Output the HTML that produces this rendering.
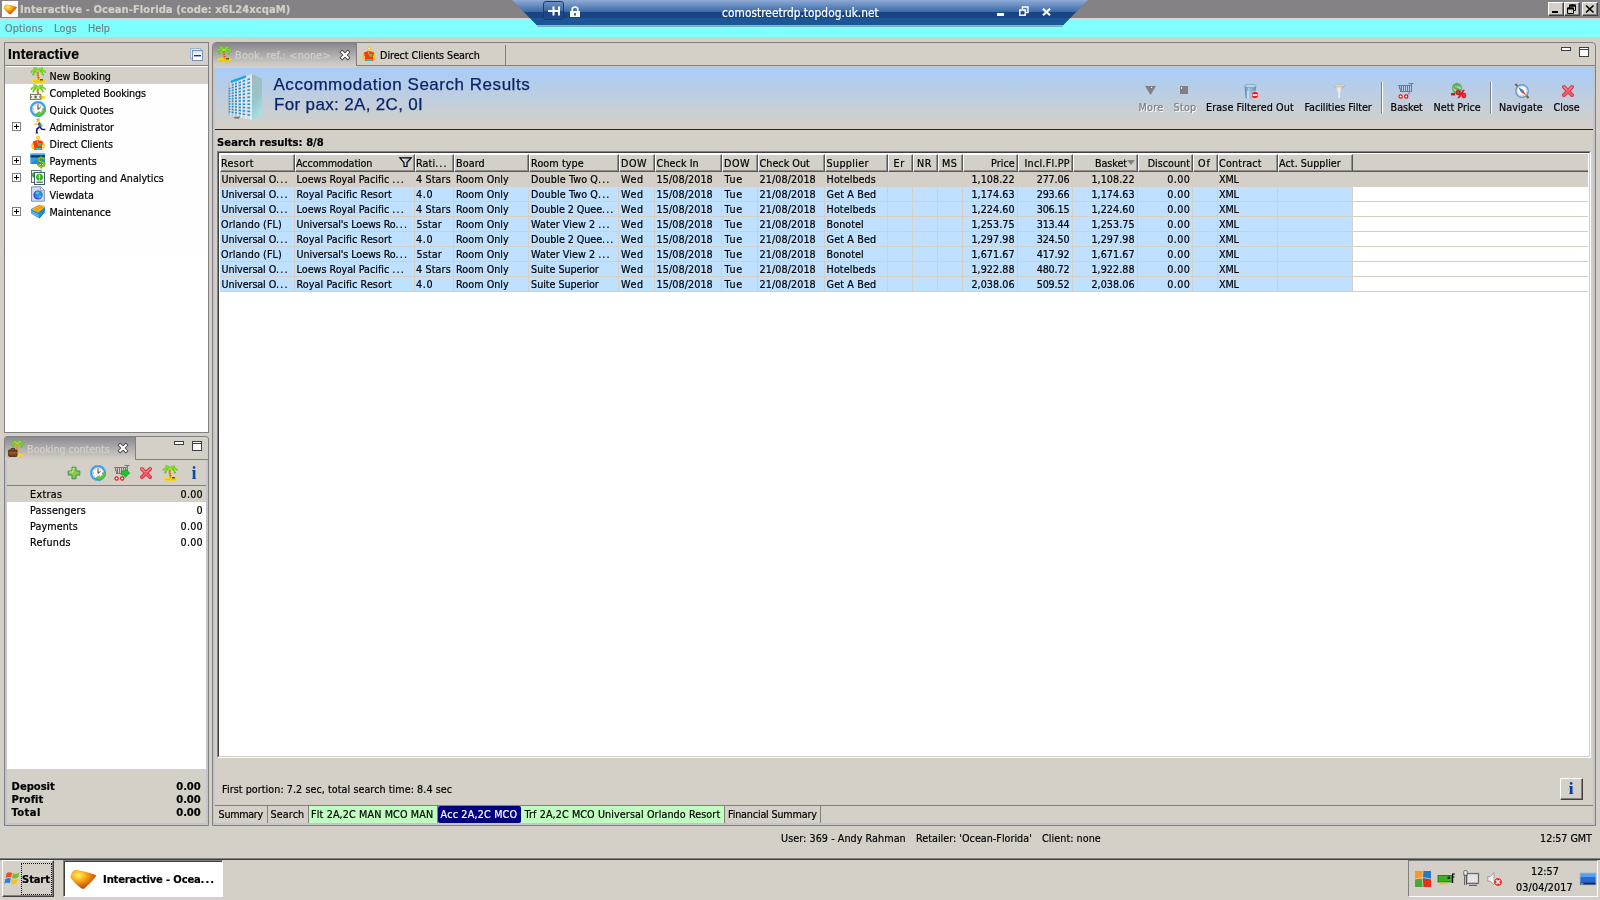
<!DOCTYPE html><html><head><meta charset="utf-8"><title>Interactive</title><style>
*{box-sizing:border-box;margin:0;padding:0}
html,body{width:1600px;height:900px;overflow:hidden;background:#d4d0c8}
#w{position:absolute;left:0;top:0;width:1600px;height:900px;will-change:transform;opacity:.9999}
body{font-family:"DejaVu Sans Condensed","DejaVu Sans","Liberation Sans",sans-serif;font-size:10.7px;color:#000;position:relative;line-height:13px;-webkit-text-stroke:.2px}
.a{position:absolute;white-space:nowrap}
.b{font-weight:bold;font-size:11.1px}
.t{position:absolute;white-space:nowrap;line-height:13px;height:13px}
svg{position:absolute;overflow:visible}
.r{text-align:right}
</style></head><body><div id="w">
<div class="a" style="left:0px;top:0px;width:1600px;height:18px;background:#848284;"></div>
<div class="a" style="left:0px;top:18px;width:1600px;height:19px;background:#80ffff;"></div>
<div class="a" style="left:0px;top:18px;width:1600px;height:1px;background:#dcd4d4;"></div>
<div class="t b" style="left:20.1px;top:3px;color:#d4d0c8;letter-spacing:0.059px;">Interactive - Ocean-Florida (code: x6L24xcqaM)</div>
<div class="t " style="left:5.1px;top:22px;color:#6c8488;letter-spacing:0.084px;">Options</div>
<div class="t " style="left:54.1px;top:22px;color:#6c8488;letter-spacing:0.132px;">Logs</div>
<div class="t " style="left:88.1px;top:22px;color:#6c8488;letter-spacing:-0.059px;">Help</div>
<div class="a" style="left:4px;top:42px;width:205px;height:391px;background:#fff;border:1px solid #808080"></div>
<div class="a" style="left:5px;top:43px;width:203px;height:23px;background:#d4d0c8;border-bottom:1px solid #808080"></div>
<div class="a" style="left:8px;top:45px;font:bold 14px 'Liberation Sans',sans-serif;line-height:18px;letter-spacing:.1px">Interactive</div>
<div class="a" style="left:5px;top:67px;width:203px;height:17px;background:#d4d0c8;"></div>
<div class="t " style="left:49.6px;top:70px;letter-spacing:-0.148px;">New Booking</div>
<div class="t " style="left:49.6px;top:87px;letter-spacing:-0.174px;">Completed Bookings</div>
<div class="t " style="left:49.6px;top:104px;letter-spacing:-0.024px;">Quick Quotes</div>
<div class="t " style="left:49.6px;top:121px;letter-spacing:-0.102px;">Administrator</div>
<div class="a" style="left:12px;top:122px;width:9px;height:9px;border:1px solid #808080;background:#fff"></div>
<div class="a" style="left:14px;top:126px;width:5px;height:1px;background:#000;"></div>
<div class="a" style="left:16px;top:124px;width:1px;height:5px;background:#000;"></div>
<div class="t " style="left:49.6px;top:138px;letter-spacing:-0.105px;">Direct Clients</div>
<div class="t " style="left:49.6px;top:155px;letter-spacing:0.017px;">Payments</div>
<div class="a" style="left:12px;top:156px;width:9px;height:9px;border:1px solid #808080;background:#fff"></div>
<div class="a" style="left:14px;top:160px;width:5px;height:1px;background:#000;"></div>
<div class="a" style="left:16px;top:158px;width:1px;height:5px;background:#000;"></div>
<div class="t " style="left:49.6px;top:172px;letter-spacing:-0.016px;">Reporting and Analytics</div>
<div class="a" style="left:12px;top:173px;width:9px;height:9px;border:1px solid #808080;background:#fff"></div>
<div class="a" style="left:14px;top:177px;width:5px;height:1px;background:#000;"></div>
<div class="a" style="left:16px;top:175px;width:1px;height:5px;background:#000;"></div>
<div class="t " style="left:49.6px;top:189px;letter-spacing:-0.032px;">Viewdata</div>
<div class="t " style="left:49.6px;top:206px;letter-spacing:-0.067px;">Maintenance</div>
<div class="a" style="left:12px;top:207px;width:9px;height:9px;border:1px solid #808080;background:#fff"></div>
<div class="a" style="left:14px;top:211px;width:5px;height:1px;background:#000;"></div>
<div class="a" style="left:16px;top:209px;width:1px;height:5px;background:#000;"></div>
<div class="a" style="left:4px;top:436px;width:205px;height:390px;background:#d4d0c8;border:1px solid #808080;border-radius:3px 3px 0 0"></div>
<div class="a" style="left:5px;top:437px;width:131px;height:23px;background:linear-gradient(#8c8a90,#d4d0c8);border-right:1px solid #808080;border-radius:2px 0 0 0"></div>
<div class="a" style="left:136px;top:459px;width:72px;height:1px;background:#808080;"></div>
<div class="t " style="left:27.1px;top:443px;color:#d4d0c8;letter-spacing:-0.062px;">Booking contents</div>
<div class="a" style="left:7px;top:486px;width:199px;height:283px;background:#fff;"></div>
<div class="a" style="left:7px;top:485px;width:199px;height:1px;background:#808080;"></div>
<div class="a" style="left:5px;top:460px;width:2px;height:365px;background:#c4c4ca;"></div>
<div class="a" style="left:206px;top:460px;width:2px;height:365px;background:#c4c4ca;"></div>
<div class="a" style="left:5px;top:823px;width:203px;height:2px;background:#c4c4ca;"></div>
<div class="a" style="left:7px;top:486px;width:199px;height:16px;background:#d4d0c8;"></div>
<div class="t " style="left:30.1px;top:488px;letter-spacing:0.285px;">Extras</div>
<div class="t r " style="right:1397.2px;top:488px;letter-spacing:0.198px;">0.00</div>
<div class="t " style="left:30.1px;top:504px;letter-spacing:0.147px;">Passengers</div>
<div class="t r " style="right:1397.3px;top:504px;letter-spacing:0.075px;">0</div>
<div class="t " style="left:30.1px;top:520px;letter-spacing:0.08px;">Payments</div>
<div class="t r " style="right:1397.2px;top:520px;letter-spacing:0.198px;">0.00</div>
<div class="t " style="left:30.1px;top:536px;letter-spacing:0.27px;">Refunds</div>
<div class="t r " style="right:1397.2px;top:536px;letter-spacing:0.198px;">0.00</div>
<div class="t b" style="left:11.6px;top:780px;letter-spacing:-0.0px;">Deposit</div>
<div class="t r b" style="right:1399.5px;top:780px;letter-spacing:-0.11px;">0.00</div>
<div class="t b" style="left:11.6px;top:793px;letter-spacing:-0.014px;">Profit</div>
<div class="t r b" style="right:1399.5px;top:793px;letter-spacing:-0.11px;">0.00</div>
<div class="t b" style="left:11.6px;top:806px;letter-spacing:0.415px;">Total</div>
<div class="t r b" style="right:1399.5px;top:806px;letter-spacing:-0.11px;">0.00</div>
<div class="a" style="left:212px;top:42px;width:1384px;height:784px;background:#d4d0c8;border:1px solid #808080;border-radius:4px 4px 0 0"></div>
<div class="a" style="left:213px;top:43px;width:143px;height:23px;background:linear-gradient(#88868c,#d4d0c8);border-radius:3px 0 0 0"></div>
<div class="a" style="left:356px;top:43px;width:1px;height:23px;background:#808080;"></div>
<div class="a" style="left:356px;top:65px;width:1239px;height:1px;background:#808080;"></div>
<div class="a" style="left:357px;top:66px;width:1236px;height:2px;background:#c8c6c2;"></div>
<div class="a" style="left:505px;top:45px;width:1px;height:20px;background:#808080;"></div>
<div class="a" style="left:213px;top:66px;width:2px;height:759px;background:#c4c4ca;"></div>
<div class="a" style="left:1593px;top:66px;width:2px;height:759px;background:#c4c4ca;"></div>
<div class="a" style="left:213px;top:823px;width:1382px;height:2px;background:#c4c4ca;"></div>
<div class="t " style="left:235.1px;top:49px;color:#d0d0d0;letter-spacing:0.22px;">Book. ref.: &lt;none&gt;</div>
<div class="t " style="left:380.1px;top:49px;letter-spacing:-0.049px;">Direct Clients Search</div>
<div class="a" style="left:215px;top:68px;width:1378px;height:61px;background:linear-gradient(#a8ccf8,#d4d0c8 96%);"></div>
<div class="a" style="left:215px;top:129px;width:1378px;height:1px;background:#0a246a;"></div>
<div class="a" style="left:273.5px;top:75.3px;font:17px 'Liberation Sans',sans-serif;line-height:20px;height:20px;color:#0a246a;-webkit-text-stroke:.25px;letter-spacing:0.529px">Accommodation Search Results</div>
<div class="a" style="left:274px;top:95.3px;font:17px 'Liberation Sans',sans-serif;line-height:20px;height:20px;color:#0a246a;-webkit-text-stroke:.25px;letter-spacing:0.343px">For pax: 2A, 2C, 0I</div>
<div class="t b" style="left:217.1px;top:136px;letter-spacing:0.037px;">Search results: 8/8</div>
<div class="t " style="left:1138.6px;top:101px;color:#808080;text-shadow:1px 1px 0 #fff;letter-spacing:0.222px;">More</div>
<div class="t " style="left:1173.6px;top:101px;color:#808080;text-shadow:1px 1px 0 #fff;letter-spacing:0.206px;">Stop</div>
<div class="t " style="left:1206.1px;top:101px;letter-spacing:0.1px;">Erase Filtered Out</div>
<div class="t " style="left:1304.6px;top:101px;letter-spacing:-0.042px;">Facilities Filter</div>
<div class="t " style="left:1390.6px;top:101px;letter-spacing:-0.029px;">Basket</div>
<div class="t " style="left:1433.6px;top:101px;letter-spacing:0.006px;">Nett Price</div>
<div class="t " style="left:1499.1px;top:101px;letter-spacing:0.07px;">Navigate</div>
<div class="t " style="left:1553.6px;top:101px;letter-spacing:-0.001px;">Close</div>
<div class="a" style="left:1381px;top:82px;width:1px;height:32px;background:#808080;"></div>
<div class="a" style="left:1382px;top:82px;width:1px;height:32px;background:#fff;"></div>
<div class="a" style="left:1490px;top:82px;width:1px;height:32px;background:#808080;"></div>
<div class="a" style="left:1491px;top:82px;width:1px;height:32px;background:#fff;"></div>
<div class="a" style="left:217px;top:151px;width:1374px;height:607px;background:#fff;border:1px solid #808080;border-right-color:#fff;border-bottom-color:#fff"></div>
<div class="a" style="left:218px;top:152px;width:1372px;height:605px;background:#fff;border:1px solid #404040;border-right-color:#d4d0c8;border-bottom-color:#d4d0c8"></div>
<div class="a" style="left:220px;top:154px;width:1368px;height:18px;background:#d4d0c8;"></div>
<div class="a" style="left:1353px;top:170px;width:235px;height:1px;background:#909090;"></div>
<div class="a" style="left:1353px;top:171px;width:235px;height:1px;background:#585858;"></div>
<div class="a" style="left:220px;top:154px;width:75px;height:18px;border-left:1px solid #fff;border-top:1px solid #fff;border-right:1px solid #585858;border-bottom:1px solid #585858;background:#d4d0c8"><div class="a" style="left:0;top:0;right:0;bottom:0;border-right:1px solid #909090;border-bottom:1px solid #909090"></div></div>
<div class="t " style="left:221.1px;top:157px;letter-spacing:0.328px;">Resort</div>
<div class="a" style="left:295px;top:154px;width:120px;height:18px;border-left:1px solid #fff;border-top:1px solid #fff;border-right:1px solid #585858;border-bottom:1px solid #585858;background:#d4d0c8"><div class="a" style="left:0;top:0;right:0;bottom:0;border-right:1px solid #909090;border-bottom:1px solid #909090"></div></div>
<div class="t " style="left:296.1px;top:157px;letter-spacing:-0.129px;">Accommodation</div>
<div class="a" style="left:415px;top:154px;width:39px;height:18px;border-left:1px solid #fff;border-top:1px solid #fff;border-right:1px solid #585858;border-bottom:1px solid #585858;background:#d4d0c8"><div class="a" style="left:0;top:0;right:0;bottom:0;border-right:1px solid #909090;border-bottom:1px solid #909090"></div></div>
<div class="t " style="left:416.1px;top:157px;letter-spacing:0.064px;">Rati<span style="letter-spacing:1.1px">...</span></div>
<div class="a" style="left:454px;top:154px;width:75px;height:18px;border-left:1px solid #fff;border-top:1px solid #fff;border-right:1px solid #585858;border-bottom:1px solid #585858;background:#d4d0c8"><div class="a" style="left:0;top:0;right:0;bottom:0;border-right:1px solid #909090;border-bottom:1px solid #909090"></div></div>
<div class="t " style="left:456.1px;top:157px;letter-spacing:0.09px;">Board</div>
<div class="a" style="left:529px;top:154px;width:90px;height:18px;border-left:1px solid #fff;border-top:1px solid #fff;border-right:1px solid #585858;border-bottom:1px solid #585858;background:#d4d0c8"><div class="a" style="left:0;top:0;right:0;bottom:0;border-right:1px solid #909090;border-bottom:1px solid #909090"></div></div>
<div class="t " style="left:531.1px;top:157px;letter-spacing:0.092px;">Room type</div>
<div class="a" style="left:619px;top:154px;width:36px;height:18px;border-left:1px solid #fff;border-top:1px solid #fff;border-right:1px solid #585858;border-bottom:1px solid #585858;background:#d4d0c8"><div class="a" style="left:0;top:0;right:0;bottom:0;border-right:1px solid #909090;border-bottom:1px solid #909090"></div></div>
<div class="t " style="left:621.1px;top:157px;letter-spacing:0.405px;">DOW</div>
<div class="a" style="left:655px;top:154px;width:67px;height:18px;border-left:1px solid #fff;border-top:1px solid #fff;border-right:1px solid #585858;border-bottom:1px solid #585858;background:#d4d0c8"><div class="a" style="left:0;top:0;right:0;bottom:0;border-right:1px solid #909090;border-bottom:1px solid #909090"></div></div>
<div class="t " style="left:656.6px;top:157px;letter-spacing:0.078px;">Check In</div>
<div class="a" style="left:722px;top:154px;width:36px;height:18px;border-left:1px solid #fff;border-top:1px solid #fff;border-right:1px solid #585858;border-bottom:1px solid #585858;background:#d4d0c8"><div class="a" style="left:0;top:0;right:0;bottom:0;border-right:1px solid #909090;border-bottom:1px solid #909090"></div></div>
<div class="t " style="left:724.1px;top:157px;letter-spacing:0.405px;">DOW</div>
<div class="a" style="left:758px;top:154px;width:67px;height:18px;border-left:1px solid #fff;border-top:1px solid #fff;border-right:1px solid #585858;border-bottom:1px solid #585858;background:#d4d0c8"><div class="a" style="left:0;top:0;right:0;bottom:0;border-right:1px solid #909090;border-bottom:1px solid #909090"></div></div>
<div class="t " style="left:759.6px;top:157px;letter-spacing:0.014px;">Check Out</div>
<div class="a" style="left:825px;top:154px;width:63px;height:18px;border-left:1px solid #fff;border-top:1px solid #fff;border-right:1px solid #585858;border-bottom:1px solid #585858;background:#d4d0c8"><div class="a" style="left:0;top:0;right:0;bottom:0;border-right:1px solid #909090;border-bottom:1px solid #909090"></div></div>
<div class="t " style="left:826.6px;top:157px;letter-spacing:0.322px;">Supplier</div>
<div class="a" style="left:888px;top:154px;width:25px;height:18px;border-left:1px solid #fff;border-top:1px solid #fff;border-right:1px solid #585858;border-bottom:1px solid #585858;background:#d4d0c8"><div class="a" style="left:0;top:0;right:0;bottom:0;border-right:1px solid #909090;border-bottom:1px solid #909090"></div></div>
<div class="t " style="left:893.6px;top:157px;letter-spacing:0.584px;">Er</div>
<div class="a" style="left:913px;top:154px;width:25px;height:18px;border-left:1px solid #fff;border-top:1px solid #fff;border-right:1px solid #585858;border-bottom:1px solid #585858;background:#d4d0c8"><div class="a" style="left:0;top:0;right:0;bottom:0;border-right:1px solid #909090;border-bottom:1px solid #909090"></div></div>
<div class="t " style="left:917.1px;top:157px;letter-spacing:0.412px;">NR</div>
<div class="a" style="left:938px;top:154px;width:25px;height:18px;border-left:1px solid #fff;border-top:1px solid #fff;border-right:1px solid #585858;border-bottom:1px solid #585858;background:#d4d0c8"><div class="a" style="left:0;top:0;right:0;bottom:0;border-right:1px solid #909090;border-bottom:1px solid #909090"></div></div>
<div class="t " style="left:942.1px;top:157px;letter-spacing:0.397px;">MS</div>
<div class="a" style="left:963px;top:154px;width:55px;height:18px;border-left:1px solid #fff;border-top:1px solid #fff;border-right:1px solid #585858;border-bottom:1px solid #585858;background:#d4d0c8"><div class="a" style="left:0;top:0;right:0;bottom:0;border-right:1px solid #909090;border-bottom:1px solid #909090"></div></div>
<div class="t r " style="right:585.4px;top:157px;letter-spacing:0.012px;">Price</div>
<div class="a" style="left:1018px;top:154px;width:55px;height:18px;border-left:1px solid #fff;border-top:1px solid #fff;border-right:1px solid #585858;border-bottom:1px solid #585858;background:#d4d0c8"><div class="a" style="left:0;top:0;right:0;bottom:0;border-right:1px solid #909090;border-bottom:1px solid #909090"></div></div>
<div class="t r " style="right:530.0999999999999px;top:157px;letter-spacing:0.27px;">Incl.Fl.PP</div>
<div class="a" style="left:1073px;top:154px;width:65px;height:18px;border-left:1px solid #fff;border-top:1px solid #fff;border-right:1px solid #585858;border-bottom:1px solid #585858;background:#d4d0c8"><div class="a" style="left:0;top:0;right:0;bottom:0;border-right:1px solid #909090;border-bottom:1px solid #909090"></div></div>
<div class="t r " style="right:472.9000000000001px;top:157px;letter-spacing:-0.029px;">Basket</div>
<div class="a" style="left:1138px;top:154px;width:55px;height:18px;border-left:1px solid #fff;border-top:1px solid #fff;border-right:1px solid #585858;border-bottom:1px solid #585858;background:#d4d0c8"><div class="a" style="left:0;top:0;right:0;bottom:0;border-right:1px solid #909090;border-bottom:1px solid #909090"></div></div>
<div class="t r " style="right:410.0999999999999px;top:157px;letter-spacing:-0.002px;">Discount</div>
<div class="a" style="left:1193px;top:154px;width:25px;height:18px;border-left:1px solid #fff;border-top:1px solid #fff;border-right:1px solid #585858;border-bottom:1px solid #585858;background:#d4d0c8"><div class="a" style="left:0;top:0;right:0;bottom:0;border-right:1px solid #909090;border-bottom:1px solid #909090"></div></div>
<div class="t " style="left:1198.1px;top:157px;letter-spacing:0.8px;">Of</div>
<div class="a" style="left:1218px;top:154px;width:60px;height:18px;border-left:1px solid #fff;border-top:1px solid #fff;border-right:1px solid #585858;border-bottom:1px solid #585858;background:#d4d0c8"><div class="a" style="left:0;top:0;right:0;bottom:0;border-right:1px solid #909090;border-bottom:1px solid #909090"></div></div>
<div class="t " style="left:1219.1px;top:157px;letter-spacing:0.143px;">Contract</div>
<div class="a" style="left:1278px;top:154px;width:75px;height:18px;border-left:1px solid #fff;border-top:1px solid #fff;border-right:1px solid #585858;border-bottom:1px solid #585858;background:#d4d0c8"><div class="a" style="left:0;top:0;right:0;bottom:0;border-right:1px solid #909090;border-bottom:1px solid #909090"></div></div>
<div class="t " style="left:1279.1px;top:157px;letter-spacing:0.041px;">Act. Supplier</div>
<div class="a" style="left:220px;top:172px;width:1368px;height:15px;background:#d4d0c8;"></div>
<div class="t " style="left:221.6px;top:172.5px;letter-spacing:-0.095px;">Universal O<span style="letter-spacing:1.1px">...</span></div>
<div class="t " style="left:296.6px;top:172.5px;letter-spacing:-0.005px;">Loews Royal Pacific <span style="letter-spacing:1.1px">...</span></div>
<div class="t " style="left:416.1px;top:172.5px;letter-spacing:0.113px;">4 Stars</div>
<div class="t " style="left:456.1px;top:172.5px;letter-spacing:0.033px;">Room Only</div>
<div class="t " style="left:531.1px;top:172.5px;letter-spacing:0.108px;">Double Two Q<span style="letter-spacing:1.1px">...</span></div>
<div class="t " style="left:621.1px;top:172.5px;letter-spacing:0.598px;">Wed</div>
<div class="t " style="left:656.6px;top:172.5px;letter-spacing:0.078px;">15/08/2018</div>
<div class="t " style="left:724.6px;top:172.5px;letter-spacing:0.645px;">Tue</div>
<div class="t " style="left:759.6px;top:172.5px;letter-spacing:0.078px;">21/08/2018</div>
<div class="t " style="left:826.6px;top:172.5px;letter-spacing:0.064px;">Hotelbeds</div>
<div class="t " style="left:1219.1px;top:172.5px;letter-spacing:-0.183px;">XML</div>
<div class="t r " style="right:585.4px;top:172.5px;letter-spacing:0.048px;">1,108.22</div>
<div class="t r " style="right:530.5999999999999px;top:172.5px;letter-spacing:-0.157px;">277.06</div>
<div class="t r " style="right:465.4000000000001px;top:172.5px;letter-spacing:0.048px;">1,108.22</div>
<div class="t r " style="right:409.70000000000005px;top:172.5px;letter-spacing:0.398px;">0.00</div>
<div class="a" style="left:220px;top:187px;width:1133px;height:14px;background:#c0e0ff;"></div>
<div class="a" style="left:220px;top:201px;width:1368px;height:1px;background:#d4d0c8;"></div>
<div class="t " style="left:221.6px;top:187.5px;letter-spacing:-0.095px;">Universal O<span style="letter-spacing:1.1px">...</span></div>
<div class="t " style="left:296.6px;top:187.5px;letter-spacing:0.076px;">Royal Pacific Resort</div>
<div class="t " style="left:416.1px;top:187.5px;letter-spacing:0.634px;">4.0</div>
<div class="t " style="left:456.1px;top:187.5px;letter-spacing:0.033px;">Room Only</div>
<div class="t " style="left:531.1px;top:187.5px;letter-spacing:0.108px;">Double Two Q<span style="letter-spacing:1.1px">...</span></div>
<div class="t " style="left:621.1px;top:187.5px;letter-spacing:0.598px;">Wed</div>
<div class="t " style="left:656.6px;top:187.5px;letter-spacing:0.078px;">15/08/2018</div>
<div class="t " style="left:724.6px;top:187.5px;letter-spacing:0.645px;">Tue</div>
<div class="t " style="left:759.6px;top:187.5px;letter-spacing:0.078px;">21/08/2018</div>
<div class="t " style="left:826.6px;top:187.5px;letter-spacing:0.139px;">Get A Bed</div>
<div class="t " style="left:1219.1px;top:187.5px;letter-spacing:-0.183px;">XML</div>
<div class="t r " style="right:585.4px;top:187.5px;letter-spacing:0.048px;">1,174.63</div>
<div class="t r " style="right:530.5999999999999px;top:187.5px;letter-spacing:-0.157px;">293.66</div>
<div class="t r " style="right:465.4000000000001px;top:187.5px;letter-spacing:0.048px;">1,174.63</div>
<div class="t r " style="right:409.70000000000005px;top:187.5px;letter-spacing:0.398px;">0.00</div>
<div class="a" style="left:220px;top:202px;width:1133px;height:14px;background:#c0e0ff;"></div>
<div class="a" style="left:220px;top:216px;width:1368px;height:1px;background:#d4d0c8;"></div>
<div class="t " style="left:221.6px;top:202.5px;letter-spacing:-0.095px;">Universal O<span style="letter-spacing:1.1px">...</span></div>
<div class="t " style="left:296.6px;top:202.5px;letter-spacing:-0.005px;">Loews Royal Pacific <span style="letter-spacing:1.1px">...</span></div>
<div class="t " style="left:416.1px;top:202.5px;letter-spacing:0.113px;">4 Stars</div>
<div class="t " style="left:456.1px;top:202.5px;letter-spacing:0.033px;">Room Only</div>
<div class="t " style="left:531.1px;top:202.5px;letter-spacing:-0.067px;">Double 2 Quee<span style="letter-spacing:1.1px">...</span></div>
<div class="t " style="left:621.1px;top:202.5px;letter-spacing:0.598px;">Wed</div>
<div class="t " style="left:656.6px;top:202.5px;letter-spacing:0.078px;">15/08/2018</div>
<div class="t " style="left:724.6px;top:202.5px;letter-spacing:0.645px;">Tue</div>
<div class="t " style="left:759.6px;top:202.5px;letter-spacing:0.078px;">21/08/2018</div>
<div class="t " style="left:826.6px;top:202.5px;letter-spacing:0.064px;">Hotelbeds</div>
<div class="t " style="left:1219.1px;top:202.5px;letter-spacing:-0.183px;">XML</div>
<div class="t r " style="right:585.4px;top:202.5px;letter-spacing:0.048px;">1,224.60</div>
<div class="t r " style="right:530.5999999999999px;top:202.5px;letter-spacing:-0.157px;">306.15</div>
<div class="t r " style="right:465.4000000000001px;top:202.5px;letter-spacing:0.048px;">1,224.60</div>
<div class="t r " style="right:409.70000000000005px;top:202.5px;letter-spacing:0.398px;">0.00</div>
<div class="a" style="left:220px;top:217px;width:1133px;height:14px;background:#c0e0ff;"></div>
<div class="a" style="left:220px;top:231px;width:1368px;height:1px;background:#d4d0c8;"></div>
<div class="t " style="left:221.1px;top:217.5px;letter-spacing:0.091px;">Orlando (FL)</div>
<div class="t " style="left:296.6px;top:217.5px;letter-spacing:-0.082px;">Universal's Loews Ro<span style="letter-spacing:1.1px">...</span></div>
<div class="t " style="left:416.6px;top:217.5px;letter-spacing:0.09px;">5star</div>
<div class="t " style="left:456.1px;top:217.5px;letter-spacing:0.033px;">Room Only</div>
<div class="t " style="left:531.1px;top:217.5px;letter-spacing:0.051px;">Water View 2 <span style="letter-spacing:1.1px">...</span></div>
<div class="t " style="left:621.1px;top:217.5px;letter-spacing:0.598px;">Wed</div>
<div class="t " style="left:656.6px;top:217.5px;letter-spacing:0.078px;">15/08/2018</div>
<div class="t " style="left:724.6px;top:217.5px;letter-spacing:0.645px;">Tue</div>
<div class="t " style="left:759.6px;top:217.5px;letter-spacing:0.078px;">21/08/2018</div>
<div class="t " style="left:826.6px;top:217.5px;letter-spacing:0.055px;">Bonotel</div>
<div class="t " style="left:1219.1px;top:217.5px;letter-spacing:-0.183px;">XML</div>
<div class="t r " style="right:585.4px;top:217.5px;letter-spacing:0.048px;">1,253.75</div>
<div class="t r " style="right:530.5999999999999px;top:217.5px;letter-spacing:-0.157px;">313.44</div>
<div class="t r " style="right:465.4000000000001px;top:217.5px;letter-spacing:0.048px;">1,253.75</div>
<div class="t r " style="right:409.70000000000005px;top:217.5px;letter-spacing:0.398px;">0.00</div>
<div class="a" style="left:220px;top:232px;width:1133px;height:14px;background:#c0e0ff;"></div>
<div class="a" style="left:220px;top:246px;width:1368px;height:1px;background:#d4d0c8;"></div>
<div class="t " style="left:221.6px;top:232.5px;letter-spacing:-0.095px;">Universal O<span style="letter-spacing:1.1px">...</span></div>
<div class="t " style="left:296.6px;top:232.5px;letter-spacing:0.076px;">Royal Pacific Resort</div>
<div class="t " style="left:416.1px;top:232.5px;letter-spacing:0.634px;">4.0</div>
<div class="t " style="left:456.1px;top:232.5px;letter-spacing:0.033px;">Room Only</div>
<div class="t " style="left:531.1px;top:232.5px;letter-spacing:-0.067px;">Double 2 Quee<span style="letter-spacing:1.1px">...</span></div>
<div class="t " style="left:621.1px;top:232.5px;letter-spacing:0.598px;">Wed</div>
<div class="t " style="left:656.6px;top:232.5px;letter-spacing:0.078px;">15/08/2018</div>
<div class="t " style="left:724.6px;top:232.5px;letter-spacing:0.645px;">Tue</div>
<div class="t " style="left:759.6px;top:232.5px;letter-spacing:0.078px;">21/08/2018</div>
<div class="t " style="left:826.6px;top:232.5px;letter-spacing:0.139px;">Get A Bed</div>
<div class="t " style="left:1219.1px;top:232.5px;letter-spacing:-0.183px;">XML</div>
<div class="t r " style="right:585.4px;top:232.5px;letter-spacing:0.048px;">1,297.98</div>
<div class="t r " style="right:530.5999999999999px;top:232.5px;letter-spacing:-0.157px;">324.50</div>
<div class="t r " style="right:465.4000000000001px;top:232.5px;letter-spacing:0.048px;">1,297.98</div>
<div class="t r " style="right:409.70000000000005px;top:232.5px;letter-spacing:0.398px;">0.00</div>
<div class="a" style="left:220px;top:247px;width:1133px;height:14px;background:#c0e0ff;"></div>
<div class="a" style="left:220px;top:261px;width:1368px;height:1px;background:#d4d0c8;"></div>
<div class="t " style="left:221.1px;top:247.5px;letter-spacing:0.091px;">Orlando (FL)</div>
<div class="t " style="left:296.6px;top:247.5px;letter-spacing:-0.082px;">Universal's Loews Ro<span style="letter-spacing:1.1px">...</span></div>
<div class="t " style="left:416.6px;top:247.5px;letter-spacing:0.09px;">5star</div>
<div class="t " style="left:456.1px;top:247.5px;letter-spacing:0.033px;">Room Only</div>
<div class="t " style="left:531.1px;top:247.5px;letter-spacing:0.051px;">Water View 2 <span style="letter-spacing:1.1px">...</span></div>
<div class="t " style="left:621.1px;top:247.5px;letter-spacing:0.598px;">Wed</div>
<div class="t " style="left:656.6px;top:247.5px;letter-spacing:0.078px;">15/08/2018</div>
<div class="t " style="left:724.6px;top:247.5px;letter-spacing:0.645px;">Tue</div>
<div class="t " style="left:759.6px;top:247.5px;letter-spacing:0.078px;">21/08/2018</div>
<div class="t " style="left:826.6px;top:247.5px;letter-spacing:0.055px;">Bonotel</div>
<div class="t " style="left:1219.1px;top:247.5px;letter-spacing:-0.183px;">XML</div>
<div class="t r " style="right:585.4px;top:247.5px;letter-spacing:0.048px;">1,671.67</div>
<div class="t r " style="right:530.5999999999999px;top:247.5px;letter-spacing:-0.157px;">417.92</div>
<div class="t r " style="right:465.4000000000001px;top:247.5px;letter-spacing:0.048px;">1,671.67</div>
<div class="t r " style="right:409.70000000000005px;top:247.5px;letter-spacing:0.398px;">0.00</div>
<div class="a" style="left:220px;top:262px;width:1133px;height:14px;background:#c0e0ff;"></div>
<div class="a" style="left:220px;top:276px;width:1368px;height:1px;background:#d4d0c8;"></div>
<div class="t " style="left:221.6px;top:262.5px;letter-spacing:-0.095px;">Universal O<span style="letter-spacing:1.1px">...</span></div>
<div class="t " style="left:296.6px;top:262.5px;letter-spacing:-0.005px;">Loews Royal Pacific <span style="letter-spacing:1.1px">...</span></div>
<div class="t " style="left:416.1px;top:262.5px;letter-spacing:0.113px;">4 Stars</div>
<div class="t " style="left:456.1px;top:262.5px;letter-spacing:0.033px;">Room Only</div>
<div class="t " style="left:531.1px;top:262.5px;letter-spacing:-0.043px;">Suite Superior</div>
<div class="t " style="left:621.1px;top:262.5px;letter-spacing:0.598px;">Wed</div>
<div class="t " style="left:656.6px;top:262.5px;letter-spacing:0.078px;">15/08/2018</div>
<div class="t " style="left:724.6px;top:262.5px;letter-spacing:0.645px;">Tue</div>
<div class="t " style="left:759.6px;top:262.5px;letter-spacing:0.078px;">21/08/2018</div>
<div class="t " style="left:826.6px;top:262.5px;letter-spacing:0.064px;">Hotelbeds</div>
<div class="t " style="left:1219.1px;top:262.5px;letter-spacing:-0.183px;">XML</div>
<div class="t r " style="right:585.4px;top:262.5px;letter-spacing:0.048px;">1,922.88</div>
<div class="t r " style="right:530.5999999999999px;top:262.5px;letter-spacing:-0.157px;">480.72</div>
<div class="t r " style="right:465.4000000000001px;top:262.5px;letter-spacing:0.048px;">1,922.88</div>
<div class="t r " style="right:409.70000000000005px;top:262.5px;letter-spacing:0.398px;">0.00</div>
<div class="a" style="left:220px;top:277px;width:1133px;height:14px;background:#c0e0ff;"></div>
<div class="a" style="left:220px;top:291px;width:1368px;height:1px;background:#d4d0c8;"></div>
<div class="t " style="left:221.6px;top:277.5px;letter-spacing:-0.095px;">Universal O<span style="letter-spacing:1.1px">...</span></div>
<div class="t " style="left:296.6px;top:277.5px;letter-spacing:0.076px;">Royal Pacific Resort</div>
<div class="t " style="left:416.1px;top:277.5px;letter-spacing:0.634px;">4.0</div>
<div class="t " style="left:456.1px;top:277.5px;letter-spacing:0.033px;">Room Only</div>
<div class="t " style="left:531.1px;top:277.5px;letter-spacing:-0.043px;">Suite Superior</div>
<div class="t " style="left:621.1px;top:277.5px;letter-spacing:0.598px;">Wed</div>
<div class="t " style="left:656.6px;top:277.5px;letter-spacing:0.078px;">15/08/2018</div>
<div class="t " style="left:724.6px;top:277.5px;letter-spacing:0.645px;">Tue</div>
<div class="t " style="left:759.6px;top:277.5px;letter-spacing:0.078px;">21/08/2018</div>
<div class="t " style="left:826.6px;top:277.5px;letter-spacing:0.139px;">Get A Bed</div>
<div class="t " style="left:1219.1px;top:277.5px;letter-spacing:-0.183px;">XML</div>
<div class="t r " style="right:585.4px;top:277.5px;letter-spacing:0.048px;">2,038.06</div>
<div class="t r " style="right:530.5999999999999px;top:277.5px;letter-spacing:-0.157px;">509.52</div>
<div class="t r " style="right:465.4000000000001px;top:277.5px;letter-spacing:0.048px;">2,038.06</div>
<div class="t r " style="right:409.70000000000005px;top:277.5px;letter-spacing:0.398px;">0.00</div>
<div class="a" style="left:294px;top:187px;width:1px;height:105px;background:#d4d0c8;"></div>
<div class="a" style="left:414px;top:187px;width:1px;height:105px;background:#d4d0c8;"></div>
<div class="a" style="left:453px;top:187px;width:1px;height:105px;background:#d4d0c8;"></div>
<div class="a" style="left:528px;top:187px;width:1px;height:105px;background:#d4d0c8;"></div>
<div class="a" style="left:618px;top:187px;width:1px;height:105px;background:#d4d0c8;"></div>
<div class="a" style="left:654px;top:187px;width:1px;height:105px;background:#d4d0c8;"></div>
<div class="a" style="left:721px;top:187px;width:1px;height:105px;background:#d4d0c8;"></div>
<div class="a" style="left:757px;top:187px;width:1px;height:105px;background:#d4d0c8;"></div>
<div class="a" style="left:824px;top:187px;width:1px;height:105px;background:#d4d0c8;"></div>
<div class="a" style="left:887px;top:187px;width:1px;height:105px;background:#d4d0c8;"></div>
<div class="a" style="left:912px;top:187px;width:1px;height:105px;background:#d4d0c8;"></div>
<div class="a" style="left:937px;top:187px;width:1px;height:105px;background:#d4d0c8;"></div>
<div class="a" style="left:962px;top:187px;width:1px;height:105px;background:#d4d0c8;"></div>
<div class="a" style="left:1017px;top:187px;width:1px;height:105px;background:#d4d0c8;"></div>
<div class="a" style="left:1072px;top:187px;width:1px;height:105px;background:#d4d0c8;"></div>
<div class="a" style="left:1137px;top:187px;width:1px;height:105px;background:#d4d0c8;"></div>
<div class="a" style="left:1192px;top:187px;width:1px;height:105px;background:#d4d0c8;"></div>
<div class="a" style="left:1217px;top:187px;width:1px;height:105px;background:#d4d0c8;"></div>
<div class="a" style="left:1277px;top:187px;width:1px;height:105px;background:#d4d0c8;"></div>
<div class="a" style="left:1352px;top:187px;width:1px;height:105px;background:#d4d0c8;"></div>
<div class="t " style="left:222.1px;top:783px;letter-spacing:0.058px;">First portion: 7.2 sec, total search time: 8.4 sec</div>
<div class="a" style="left:215px;top:805px;width:1378px;height:1px;background:#808080;"></div>
<div class="a" style="left:214px;top:806px;width:54px;height:17px;background:#d4d0c8;border-right:1px solid #808080"></div>
<div class="t " style="left:218.6px;top:807.5px;color:#000;letter-spacing:-0.324px;">Summary</div>
<div class="a" style="left:268px;top:806px;width:41px;height:17px;background:#d4d0c8;border-right:1px solid #808080"></div>
<div class="t " style="left:270.6px;top:807.5px;color:#000;letter-spacing:0.114px;">Search</div>
<div class="a" style="left:309px;top:806px;width:129px;height:17px;background:#c0ffc0;border-right:1px solid #808080"></div>
<div class="t " style="left:311.1px;top:807.5px;color:#000;letter-spacing:0.13px;">Flt 2A,2C MAN MCO MAN</div>
<div class="a" style="left:438px;top:806px;width:83px;height:17px;background:#000080;border-radius:2px"></div>
<div class="t " style="left:440.6px;top:807.5px;color:#fff;letter-spacing:0.19px;">Acc 2A,2C MCO</div>
<div class="a" style="left:521px;top:806px;width:204px;height:17px;background:#c0ffc0;border-right:1px solid #808080"></div>
<div class="t " style="left:524.6px;top:807.5px;color:#000;letter-spacing:0.1px;">Trf 2A,2C MCO Universal Orlando Resort</div>
<div class="a" style="left:725px;top:806px;width:96px;height:17px;background:#d4d0c8;border-right:1px solid #808080"></div>
<div class="t " style="left:728.1px;top:807.5px;color:#000;letter-spacing:-0.168px;">Financial Summary</div>
<div class="a" style="left:1560px;top:778px;width:23px;height:22px;background:#d4d0c8;border:1px solid;border-color:#fff #404040 #404040 #fff;box-shadow:inset -1px -1px 0 #808080"></div>
<div class="a" style="left:1560px;top:778px;width:22px;height:21px;text-align:center;font:bold 17px 'Liberation Serif',serif;line-height:21px;color:#0040a0">i</div>
<div class="t " style="left:781.1px;top:832px;letter-spacing:0.062px;">User: 369 - Andy Rahman</div>
<div class="t " style="left:916.1px;top:832px;letter-spacing:0.016px;">Retailer: 'Ocean-Florida'</div>
<div class="t " style="left:1042.1px;top:832px;letter-spacing:0.048px;">Client: none</div>
<div class="t " style="left:1540.1px;top:832px;letter-spacing:-0.077px;">12:57 GMT</div>
<div class="a" style="left:0px;top:858px;width:1600px;height:1px;background:#808080;"></div>
<div class="a" style="left:0px;top:859px;width:1600px;height:1px;background:#404040;"></div>
<div class="a" style="left:2px;top:860px;width:52px;height:37px;background:#d4d0c8;border:1px solid;border-color:#fff #404040 #404040 #fff;box-shadow:inset -1px -1px 0 #808080"></div>
<div class="a" style="left:21px;top:863px;width:31px;height:32px;background:transparent;border:1px dotted #000"></div>
<div class="t b" style="left:22.1px;top:873px;letter-spacing:-0.138px;">Start</div>
<div class="a" style="left:63px;top:860px;width:160px;height:37px;background:#fff;border:1px solid;border-color:#808080 #fff #fff #808080;box-shadow:inset 1px 1px 0 #404040"></div>
<div class="t b" style="left:103.1px;top:873px;letter-spacing:-0.162px;">Interactive - Ocea<span style="letter-spacing:1.1px">...</span></div>
<div class="a" style="left:1408px;top:860px;width:190px;height:37px;background:#d4d0c8;border:1px solid;border-color:#808080 #fff #fff #808080"></div>
<div class="t " style="left:1531.1px;top:865px;letter-spacing:-0.004px;">12:57</div>
<div class="t " style="left:1516.1px;top:881px;letter-spacing:0.128px;">03/04/2017</div>
<svg style="left:512px;top:0" width="576" height="27" viewBox="0 0 576 27">
<defs><linearGradient id="rg" x1="0" y1="0" x2="0" y2="1">
<stop offset="0" stop-color="#8eaad6"/><stop offset="0.44" stop-color="#3c6ca8"/><stop offset="0.45" stop-color="#1a4584"/><stop offset="0.68" stop-color="#1a4584"/><stop offset="0.69" stop-color="#1b5696"/><stop offset="0.95" stop-color="#1b5696"/><stop offset="0.96" stop-color="#9ab4d0"/><stop offset="1" stop-color="#606870"/></linearGradient></defs>
<polygon points="0,0 576,0 550,26.5 26,26.5" fill="url(#rg)"/>
</svg>
<div class="t " style="left:722.1px;top:7px;font-size:11.8px;color:#fff;letter-spacing:0.042px;">comostreetrdp.topdog.uk.net</div>
<div class="a" style="left:2px;top:1px;width:16px;height:16px;background:#fff;"></div>
<svg style="left:3px;top:3.5px" width="14.5" height="11" viewBox="0 0 16 12"><defs><radialGradient id="gm" cx=".32" cy=".28" r=".8"><stop offset="0" stop-color="#fff070"/><stop offset=".3" stop-color="#fcb820"/><stop offset=".65" stop-color="#e07010"/><stop offset="1" stop-color="#a83808"/></radialGradient></defs><path d="M.6 4.6 Q1.4 1.2 3.4 .6 Q9 1 15.4 3.6 Q14.6 5.8 8.6 11.2 Q7.6 11.6 6.6 10.8 Q2.6 8 .6 4.6Z" fill="url(#gm)"/></svg>
<div class="a" style="left:1548px;top:2px;width:16px;height:14px;background:#d4d0c8;border:1px solid;border-color:#fff #404040 #404040 #fff;box-shadow:inset -1px -1px 0 #808080"></div>
<div class="a" style="left:1564px;top:2px;width:16px;height:14px;background:#d4d0c8;border:1px solid;border-color:#fff #404040 #404040 #fff;box-shadow:inset -1px -1px 0 #808080"></div>
<div class="a" style="left:1582px;top:2px;width:16px;height:14px;background:#d4d0c8;border:1px solid;border-color:#fff #404040 #404040 #fff;box-shadow:inset -1px -1px 0 #808080"></div>
<div class="a" style="left:1552px;top:11px;width:6px;height:2px;background:#000;"></div>
<svg style="left:1564px;top:2px" width="16" height="14"><path d="M5.5 3 H11.5 V8.5 H5.5Z M5.5 4 H11.5" fill="none" stroke="#000" stroke-width="1"/><path d="M5.5 3.5H11.5" stroke="#000" stroke-width="2"/><path d="M3.5 6 H9.5 V11.5 H3.5Z" fill="#d4d0c8" stroke="#000" stroke-width="1"/><path d="M3.5 6.5H9.5" stroke="#000" stroke-width="2"/></svg>
<svg style="left:1582px;top:2px" width="16" height="14"><path d="M4 3.5 L11.5 10.5 M11.5 3.5 L4 10.5" stroke="#000" stroke-width="1.7"/></svg>
<svg style="left:30px;top:67px" width="16" height="16" viewBox="0 0 16 16"><ellipse cx="8.6" cy="13.6" rx="7" ry="1.9" fill="#ffe000"/><ellipse cx="8.6" cy="14.4" rx="5.5" ry="1.2" fill="#f0c800"/><path d="M7.6 4.5 Q7.2 9 8.8 13" stroke="#e89818" stroke-width="2" fill="none"/><path d="M7.3 6 h1.4 M7.5 8.3 h1.4 M7.9 10.5 h1.4" stroke="#a04808" stroke-width="0.8"/><path d="M10 12.8 h3" stroke="#503010" stroke-width="1.2"/><g fill="none" stroke-linecap="round"><path d="M8 4 Q5 1.2 1.4 4.8 M8 4 Q5 3.5 3.2 7.6 M8 4 Q11.5 1.2 15.2 5 M8 4 Q11.5 3.5 13 7.8 M8 4 Q6.5 0.8 4.2 1.2 M8 4 Q9.8 0.8 12.2 1.4" stroke="#5cc018" stroke-width="1.7"/><path d="M8 3.6 Q5 1.4 2 4.2 M8 3.6 Q11.5 1.4 14.5 4.4 M8 3.6 Q6.5 1 4.6 1.2 M8 3.6 Q9.8 1 12 1.4 M7.8 4 Q5.5 4 4 6.6 M8.2 4 Q11 4 12.4 6.8" stroke="#a0f038" stroke-width=".8"/></g></svg>
<svg style="left:30px;top:84px" width="16" height="16" viewBox="0 0 16 16"><ellipse cx="12" cy="13.3" rx="3.6" ry="1.6" fill="#ffd800"/><path d="M7.6 4.5 Q7.2 8 8.6 11" stroke="#e89818" stroke-width="2" fill="none"/><path d="M7.3 6 h1.4 M7.5 8.3 h1.4" stroke="#a04808" stroke-width="0.8"/><g fill="none" stroke-linecap="round"><path d="M8 4 Q5 1.2 1.4 4.8 M8 4 Q5 3.5 3.2 7.6 M8 4 Q11.5 1.2 15.2 5 M8 4 Q11.5 3.5 13 7.8 M8 4 Q6.5 0.8 4.2 1.2 M8 4 Q9.8 0.8 12.2 1.4" stroke="#5cc018" stroke-width="1.7"/><path d="M8 3.6 Q5 1.4 2 4.2 M8 3.6 Q11.5 1.4 14.5 4.4 M8 3.6 Q6.5 1 4.6 1.2 M8 3.6 Q9.8 1 12 1.4 M7.8 4 Q5.5 4 4 6.6 M8.2 4 Q11 4 12.4 6.8" stroke="#a0f038" stroke-width=".8"/></g><rect x="0.4" y="10.4" width="10.4" height="5" fill="#f4f4e4" stroke="#707058" stroke-width="1"/><circle cx="5.6" cy="12.9" r="1.6" fill="#909078"/><circle cx="5.6" cy="12.9" r="0.7" fill="#505040"/><path d="M1.6 12 v2 M9.6 12 v2" stroke="#808068" stroke-width="0.8"/></svg>
<svg style="left:30px;top:101px" width="16" height="16" viewBox="0 0 16 16"><circle cx="8" cy="8" r="6.9" fill="#fcfcfc" stroke="#2a9cf4" stroke-width="2.2"/><circle cx="8" cy="8" r="7.6" fill="none" stroke="#60c0ff" stroke-width=".6"/><circle cx="8" cy="8" r="5.6" fill="none" stroke="#c8b8a8" stroke-width=".6"/><path d="M8 8.4 V4.2 M8 8.4 L10.6 6.2" stroke="#383838" stroke-width="1" fill="none"/><g fill="#585048"><circle cx="8" cy="3.6" r=".55"/><circle cx="12.4" cy="8" r=".55"/><circle cx="3.6" cy="8" r=".55"/><circle cx="8" cy="12.4" r=".55"/><circle cx="10.2" cy="4.2" r=".35"/><circle cx="5.8" cy="4.2" r=".35"/><circle cx="4.2" cy="10.2" r=".35"/><circle cx="11.8" cy="10.2" r=".35"/></g><path d="M15.6 7.4 Q15.6 13.4 9.6 14.4 L9.8 16 L5.6 13.2 L9.4 10.6 L9.5 12.2 Q13 11.6 13.2 8Z" fill="#5ccc2c" stroke="#3ca018" stroke-width=".5" stroke-linejoin="round"/></svg>
<svg style="left:30px;top:118px" width="16" height="16" viewBox="0 0 16 16"><circle cx="8.2" cy="2.6" r="1.7" fill="#f8c040"/><path d="M6.5 1.4 l3-.6" stroke="#f0a000" stroke-width="1.2"/><path d="M9.4 3.8 L11.6 8.6 L9 9.6 L7.8 5.4 Z" fill="#3858b8"/><path d="M10.2 4.6 L12.6 7.2 L11.2 8.8 L9.6 6.4z" fill="#58a830"/><path d="M11.4 5.4 l.8 3" stroke="#f0c020" stroke-width="1"/><path d="M7.8 6 L4.4 6.4" stroke="#f8b830" stroke-width="1.3"/><path d="M9.8 9 L12 11.2 L15.4 11.6" stroke="#18189c" stroke-width="1.5" fill="none"/><path d="M9.4 9.2 L7 11 L6.6 14.6" stroke="#18189c" stroke-width="1.6" fill="none"/><path d="M5.8 14.8 h2" stroke="#101070" stroke-width="1.4"/></svg>
<svg style="left:30px;top:135px" width="16" height="16" viewBox="0 0 16 16"><circle cx="8" cy="2.6" r="2" fill="#ffc428"/><ellipse cx="8" cy="2.4" rx="1" ry=".6" fill="#fff0a0"/><path d="M3 6.6 Q8 3.6 13 6.6 L13.6 9.4 L12 10 L12 15 L4 15 L4 10 L2.4 9.4 Z" fill="#ff3a08"/><path d="M2.6 8.6 Q1.2 11.5 3.6 13.6 M13.4 8.6 Q14.8 11.5 12.4 13.6" stroke="#ffc820" stroke-width="1.8" fill="none" stroke-linecap="round"/><rect x="8" y="8" width="3.4" height="2.6" fill="#20d860"/><rect x="5.4" y="13" width="5.4" height="2" fill="#18c8d8"/><path d="M7.6 5.4 v3" stroke="#ffb020" stroke-width=".8"/></svg>
<svg style="left:30px;top:152px" width="16" height="16" viewBox="0 0 16 16"><rect x="0.5" y="1.5" width="14.5" height="10.5" rx=".8" fill="#1c8ce0"/><rect x="0.5" y="3.2" width="14.5" height="2.2" fill="#0c3c70"/><path d="M0.5 12 L8 6 L0.5 6z" fill="#48a8f0" opacity=".6"/><rect x="0.5" y="1.5" width="14.5" height="1.4" fill="#58b4f4"/><text x="11.4" y="14.6" font-family="Liberation Sans,sans-serif" font-weight="bold" font-size="14.5" text-anchor="middle" fill="#a0dc20" stroke="#5c9808" stroke-width=".7">$</text></svg>
<svg style="left:30px;top:169px" width="16" height="16" viewBox="0 0 16 16"><rect x="1.5" y="1.5" width="9.5" height="12" fill="#fff" stroke="#587080" stroke-width="1"/><circle cx="5" cy="6" r="3" fill="#30b020"/><rect x="4.5" y="3.5" width="10" height="12" fill="#fff" stroke="#405868" stroke-width="1"/><circle cx="9.5" cy="8.2" r="3.4" fill="#28b018"/><circle cx="9" cy="7.4" r="2" fill="#58d848" opacity=".6"/><path d="M9.5 5.8 v3" stroke="#fff" stroke-width="1.2"/><circle cx="9.5" cy="10.2" r=".6" fill="#fff"/><path d="M6.4 13.2 h6.4" stroke="#303030" stroke-width="1"/></svg>
<svg style="left:30px;top:186px" width="16" height="16" viewBox="0 0 16 16"><path d="M1.5 .8 H10.6 L14.4 4.6 V15.2 H1.5Z" fill="#d0dcf4" stroke="#8494a8" stroke-width="1"/><path d="M10.6 .8 V4.6 H14.4Z" fill="#fff" stroke="#8494a8" stroke-width=".8"/><circle cx="8" cy="9" r="4.6" fill="#4840d0"/><circle cx="8.6" cy="8.6" r="3.9" fill="#3c80f0"/><path d="M6 6.4 Q8 5 9.6 6.4 Q9 8 7.2 8.4 Q5.6 8 6 6.4Z M8.6 9.6 Q10.6 9 11.4 10.4 Q10.4 12.4 8.8 12.2Z" fill="#30e0c8"/></svg>
<svg style="left:30px;top:203px" width="16" height="16" viewBox="0 0 16 16"><path d="M1 6 L9 2 L15 4 L15 9 L9.5 15.5 L1 10.5Z" fill="#1c90d8"/><path d="M1 6.6 L9 2.4 L15 4.2 L8.6 9.4Z" fill="#f8b018"/><path d="M2.6 5 L10 1.4 L15.2 3 L8.8 7.4Z" fill="#ffd030"/><path d="M3.4 5.4 L10 2.2 M5 6.4 L11.8 3 M6.8 7.2 L13.4 3.6" stroke="#e87808" stroke-width=".9"/><path d="M1 8.4 L8.6 11.6 L15 6.2 M1 10 L8.8 13.4 L15 8" stroke="#80d8f8" stroke-width=".8" fill="none"/><path d="M8.6 9.4 L9.5 15.5 L15 9 L15 4.2Z" fill="#1468b0" opacity=".55"/></svg>
<svg style="left:190px;top:48px" width="13" height="13" viewBox="0 0 13 13"><rect x=".5" y=".5" width="10" height="10" fill="#ddeaf8" stroke="#a0b4d0" stroke-width="1"/><defs><linearGradient id="cg" x1="0" y1="0" x2="0" y2="1"><stop offset="0" stop-color="#c8e0f8"/><stop offset=".5" stop-color="#fff"/></linearGradient></defs><rect x="2.5" y="2.5" width="10" height="10" fill="url(#cg)" stroke="#8090b0" stroke-width="1"/><rect x="4" y="7" width="7" height="1.4" fill="#103c78"/></svg>
<svg style="left:216px;top:46px" width="16" height="16" viewBox="0 0 16 16"><ellipse cx="8.6" cy="13.6" rx="7" ry="1.9" fill="#ffe000"/><ellipse cx="8.6" cy="14.4" rx="5.5" ry="1.2" fill="#f0c800"/><path d="M7.6 4.5 Q7.2 9 8.8 13" stroke="#e89818" stroke-width="2" fill="none"/><path d="M7.3 6 h1.4 M7.5 8.3 h1.4 M7.9 10.5 h1.4" stroke="#a04808" stroke-width="0.8"/><path d="M10 12.8 h3" stroke="#503010" stroke-width="1.2"/><g fill="none" stroke-linecap="round"><path d="M8 4 Q5 1.2 1.4 4.8 M8 4 Q5 3.5 3.2 7.6 M8 4 Q11.5 1.2 15.2 5 M8 4 Q11.5 3.5 13 7.8 M8 4 Q6.5 0.8 4.2 1.2 M8 4 Q9.8 0.8 12.2 1.4" stroke="#5cc018" stroke-width="1.7"/><path d="M8 3.6 Q5 1.4 2 4.2 M8 3.6 Q11.5 1.4 14.5 4.4 M8 3.6 Q6.5 1 4.6 1.2 M8 3.6 Q9.8 1 12 1.4 M7.8 4 Q5.5 4 4 6.6 M8.2 4 Q11 4 12.4 6.8" stroke="#a0f038" stroke-width=".8"/></g></svg>
<svg style="left:339.5px;top:49.5px" width="10" height="10" viewBox="0 0 10 10"><path d="M2.2 2.2 L7.8 7.8 M7.8 2.2 L2.2 7.8" stroke="#404040" stroke-width="3.8" stroke-linecap="square" fill="none"/><path d="M2.2 2.2 L7.8 7.8 M7.8 2.2 L2.2 7.8" stroke="#fff" stroke-width="2.2" stroke-linecap="square" fill="none"/></svg>
<svg style="left:361px;top:46px" width="16" height="16" viewBox="0 0 16 16"><circle cx="8" cy="2.6" r="2" fill="#ffc428"/><ellipse cx="8" cy="2.4" rx="1" ry=".6" fill="#fff0a0"/><path d="M3 6.6 Q8 3.6 13 6.6 L13.6 9.4 L12 10 L12 15 L4 15 L4 10 L2.4 9.4 Z" fill="#ff3a08"/><path d="M2.6 8.6 Q1.2 11.5 3.6 13.6 M13.4 8.6 Q14.8 11.5 12.4 13.6" stroke="#ffc820" stroke-width="1.8" fill="none" stroke-linecap="round"/><rect x="8" y="8" width="3.4" height="2.6" fill="#20d860"/><rect x="5.4" y="13" width="5.4" height="2" fill="#18c8d8"/><path d="M7.6 5.4 v3" stroke="#ffb020" stroke-width=".8"/></svg>
<svg style="left:1561px;top:47px" width="28" height="10" viewBox="0 0 28 10"><rect x=".5" y=".5" width="9" height="3" fill="#fff" stroke="#404040" stroke-width="1"/><rect x="18.5" y=".5" width="9" height="9" fill="#fff" stroke="#404040" stroke-width="1"/><path d="M18.5 2.5 H27.5" stroke="#404040" stroke-width="1"/></svg>
<svg style="left:227px;top:73px" width="36" height="48" viewBox="0 0 36 48"><defs><linearGradient id="bs" x1="0" y1="0" x2=".3" y2="1"><stop offset="0" stop-color="#a4b8bc"/><stop offset=".6" stop-color="#98c4c8"/><stop offset="1" stop-color="#a4e0e4"/></linearGradient><linearGradient id="bf" x1="0" y1="0" x2="1" y2="0"><stop offset="0" stop-color="#b4c0c8"/><stop offset="1" stop-color="#e4e8ea"/></linearGradient></defs><path d="M25 1 L35 5.4 V42.6 L25 46.8Z" fill="url(#bs)"/><path d="M1 9.2 L25 1 V46.8 L1 42.8Z" fill="url(#bf)"/><path d="M4 7.4 L19 2.2 V4.8 L4 10Z" fill="#10a8f0"/><path d="M3.9 10.2 V43.3" stroke="#f4f6f8" stroke-width=".9"/><path d="M7.1 9.1 V43.8" stroke="#f4f6f8" stroke-width=".9"/><path d="M10.5 8.0 V44.4" stroke="#f4f6f8" stroke-width=".9"/><path d="M14.5 6.6 V45.0" stroke="#f4f6f8" stroke-width=".9"/><path d="M18.7 5.2 V45.7" stroke="#f4f6f8" stroke-width=".9"/><path d="M23.7 3.5 V46.6" stroke="#f4f6f8" stroke-width=".9"/><path d="M1.8 14.9 l1.6 -0.47 v1.5 l-1.6 0.47z" fill="#1890e0"/><path d="M1.8 17.4 l1.6 -0.38 v1.5 l-1.6 0.38z" fill="#1890e0"/><path d="M1.8 20.0 l1.6 -0.30 v1.5 l-1.6 0.30z" fill="#1890e0"/><path d="M1.8 22.6 l1.6 -0.22 v1.5 l-1.6 0.22z" fill="#1890e0"/><path d="M1.8 25.1 l1.6 -0.14 v1.5 l-1.6 0.14z" fill="#1890e0"/><path d="M1.8 27.7 l1.6 -0.06 v1.5 l-1.6 0.06z" fill="#1890e0"/><path d="M1.8 30.3 l1.6 0.02 v1.5 l-1.6 -0.02z" fill="#1890e0"/><path d="M1.8 32.8 l1.6 0.10 v1.5 l-1.6 -0.10z" fill="#1890e0"/><path d="M1.8 35.4 l1.6 0.19 v1.5 l-1.6 -0.19z" fill="#1890e0"/><path d="M1.8 37.9 l1.6 0.27 v1.5 l-1.6 -0.27z" fill="#1890e0"/><path d="M4.8 11.3 l1.8 -0.61 v1.5 l-1.8 0.61z" fill="#1890e0"/><path d="M4.8 14.0 l1.8 -0.52 v1.5 l-1.8 0.52z" fill="#1890e0"/><path d="M4.8 16.7 l1.8 -0.43 v1.5 l-1.8 0.43z" fill="#1890e0"/><path d="M4.8 19.4 l1.8 -0.34 v1.5 l-1.8 0.34z" fill="#1890e0"/><path d="M4.8 22.2 l1.8 -0.25 v1.5 l-1.8 0.25z" fill="#1890e0"/><path d="M4.8 24.9 l1.8 -0.16 v1.5 l-1.8 0.16z" fill="#1890e0"/><path d="M4.8 27.6 l1.8 -0.07 v1.5 l-1.8 0.07z" fill="#1890e0"/><path d="M4.8 30.3 l1.8 0.03 v1.5 l-1.8 -0.03z" fill="#1890e0"/><path d="M4.8 33.0 l1.8 0.12 v1.5 l-1.8 -0.12z" fill="#1890e0"/><path d="M4.8 35.7 l1.8 0.21 v1.5 l-1.8 -0.21z" fill="#1890e0"/><path d="M4.8 38.4 l1.8 0.30 v1.5 l-1.8 -0.30z" fill="#1890e0"/><path d="M8.0 10.2 l2.0 -0.68 v1.5 l-2.0 0.68z" fill="#1890e0"/><path d="M8.0 13.1 l2.0 -0.58 v1.5 l-2.0 0.58z" fill="#1890e0"/><path d="M8.0 16.0 l2.0 -0.48 v1.5 l-2.0 0.48z" fill="#1890e0"/><path d="M8.0 18.8 l2.0 -0.38 v1.5 l-2.0 0.38z" fill="#1890e0"/><path d="M8.0 21.7 l2.0 -0.28 v1.5 l-2.0 0.28z" fill="#1890e0"/><path d="M8.0 24.6 l2.0 -0.17 v1.5 l-2.0 0.17z" fill="#1890e0"/><path d="M8.0 27.5 l2.0 -0.07 v1.5 l-2.0 0.07z" fill="#1890e0"/><path d="M8.0 30.3 l2.0 0.03 v1.5 l-2.0 -0.03z" fill="#1890e0"/><path d="M8.0 33.2 l2.0 0.13 v1.5 l-2.0 -0.13z" fill="#1890e0"/><path d="M8.0 36.1 l2.0 0.23 v1.5 l-2.0 -0.23z" fill="#1890e0"/><path d="M8.0 39.0 l2.0 0.33 v1.5 l-2.0 -0.33z" fill="#1890e0"/><path d="M11.8 8.9 l2.2 -0.75 v1.5 l-2.2 0.75z" fill="#1890e0"/><path d="M11.8 12.0 l2.2 -0.64 v1.5 l-2.2 0.64z" fill="#1890e0"/><path d="M11.8 15.0 l2.2 -0.53 v1.5 l-2.2 0.53z" fill="#1890e0"/><path d="M11.8 18.1 l2.2 -0.42 v1.5 l-2.2 0.42z" fill="#1890e0"/><path d="M11.8 21.2 l2.2 -0.30 v1.5 l-2.2 0.30z" fill="#1890e0"/><path d="M11.8 24.3 l2.2 -0.19 v1.5 l-2.2 0.19z" fill="#1890e0"/><path d="M11.8 27.3 l2.2 -0.08 v1.5 l-2.2 0.08z" fill="#1890e0"/><path d="M11.8 30.4 l2.2 0.03 v1.5 l-2.2 -0.03z" fill="#1890e0"/><path d="M11.8 33.5 l2.2 0.14 v1.5 l-2.2 -0.14z" fill="#1890e0"/><path d="M11.8 36.5 l2.2 0.25 v1.5 l-2.2 -0.25z" fill="#1890e0"/><path d="M11.8 39.6 l2.2 0.37 v1.5 l-2.2 -0.37z" fill="#1890e0"/><path d="M15.8 7.5 l2.4 -0.82 v1.5 l-2.4 0.82z" fill="#1890e0"/><path d="M15.8 10.8 l2.4 -0.70 v1.5 l-2.4 0.70z" fill="#1890e0"/><path d="M15.8 14.1 l2.4 -0.58 v1.5 l-2.4 0.58z" fill="#1890e0"/><path d="M15.8 17.4 l2.4 -0.45 v1.5 l-2.4 0.45z" fill="#1890e0"/><path d="M15.8 20.6 l2.4 -0.33 v1.5 l-2.4 0.33z" fill="#1890e0"/><path d="M15.8 23.9 l2.4 -0.21 v1.5 l-2.4 0.21z" fill="#1890e0"/><path d="M15.8 27.2 l2.4 -0.09 v1.5 l-2.4 0.09z" fill="#1890e0"/><path d="M15.8 30.4 l2.4 0.03 v1.5 l-2.4 -0.03z" fill="#1890e0"/><path d="M15.8 33.7 l2.4 0.16 v1.5 l-2.4 -0.16z" fill="#1890e0"/><path d="M15.8 37.0 l2.4 0.28 v1.5 l-2.4 -0.28z" fill="#1890e0"/><path d="M15.8 40.3 l2.4 0.40 v1.5 l-2.4 -0.40z" fill="#1890e0"/><path d="M20.4 6.0 l2.8 -0.96 v1.5 l-2.8 0.96z" fill="#1890e0"/><path d="M20.4 9.5 l2.8 -0.81 v1.5 l-2.8 0.81z" fill="#1890e0"/><path d="M20.4 13.0 l2.8 -0.67 v1.5 l-2.8 0.67z" fill="#1890e0"/><path d="M20.4 16.5 l2.8 -0.53 v1.5 l-2.8 0.53z" fill="#1890e0"/><path d="M20.4 20.0 l2.8 -0.39 v1.5 l-2.8 0.39z" fill="#1890e0"/><path d="M20.4 23.5 l2.8 -0.24 v1.5 l-2.8 0.24z" fill="#1890e0"/><path d="M20.4 27.0 l2.8 -0.10 v1.5 l-2.8 0.10z" fill="#1890e0"/><path d="M20.4 30.5 l2.8 0.04 v1.5 l-2.8 -0.04z" fill="#1890e0"/><path d="M20.4 34.0 l2.8 0.18 v1.5 l-2.8 -0.18z" fill="#1890e0"/><path d="M20.4 37.5 l2.8 0.32 v1.5 l-2.8 -0.32z" fill="#1890e0"/><path d="M20.4 41.0 l2.8 0.47 v1.5 l-2.8 -0.47z" fill="#1890e0"/><path d="M6 44 L13 43.4 L12 45.8 L8 45.6Z" fill="#70787c"/></svg>
<svg style="left:1145px;top:86px" width="11" height="9" viewBox="0 0 11 9"><path d="M0 0 H11 L5.5 9Z" fill="#808080"/><rect x="6" y="1" width="1" height="1" fill="#fff"/></svg>
<svg style="left:1180px;top:86px" width="8" height="8" viewBox="0 0 8 8"><rect x="0" y="0" width="8" height="8" fill="#808080"/><rect x="1" y="1" width="1" height="2" fill="#e8e8e8"/></svg>
<svg style="left:1244px;top:84px" width="15" height="15" viewBox="0 0 15 15"><defs><linearGradient id="bk" x1="0" x2="1"><stop offset="0" stop-color="#4880b0"/><stop offset=".35" stop-color="#a8cce4"/><stop offset="1" stop-color="#6090b8"/></linearGradient></defs><path d="M.6 2 L1.6 14.4 H11 L12.2 2Z" fill="url(#bk)"/><ellipse cx="6.4" cy="2" rx="5.9" ry="1.7" fill="#b8d4e8" stroke="#6890b0" stroke-width=".6"/><rect x="3.2" y="7" width="1.4" height="7.4" fill="#e8f0f8" opacity=".8"/><circle cx="11" cy="11" r="3.8" fill="#e02028" stroke="#f8f8f8" stroke-width=".7"/><rect x="8.6" y="10.2" width="4.8" height="1.7" fill="#fff"/></svg>
<svg style="left:1333px;top:84px" width="12" height="14" viewBox="0 0 12 14"><defs><linearGradient id="fn" x1="0" x2="1"><stop offset="0" stop-color="#a0a0a0"/><stop offset=".5" stop-color="#f4f4f4"/><stop offset="1" stop-color="#989898"/></linearGradient></defs><path d="M0 1.4 Q6 -1 12 1.4 L7 8.4 V14 H5.4 V8.4Z" fill="url(#fn)"/><ellipse cx="6" cy="1.6" rx="5.6" ry="1.3" fill="#d8d8d8" stroke="#a8a8a8" stroke-width=".5"/></svg>
<svg style="left:1398px;top:83px" width="16" height="16" viewBox="0 0 16 16"><path d="M0 2.5 H14 M13.5 0 V9 M10.5 .5 H15.5 M2 8.5 H12.5" stroke="#787878" stroke-width="1" fill="none"/><path d="M1.5 3 V6 M3.5 3 V8 M5.5 3 V8 M7.5 3 V8 M9.5 3 V8 M11.5 3 V8" stroke="#787878" stroke-width="1" fill="none"/><path d="M1.5 3 L2.8 8.4 M12.4 9 L9.6 11.6" stroke="#787878" stroke-width="1" fill="none"/><circle cx="2.6" cy="13.5" r="1.6" fill="#fff" stroke="#f01010" stroke-width="1.2"/><circle cx="8.2" cy="13.5" r="1.6" fill="#fff" stroke="#f01010" stroke-width="1.2"/></svg>
<svg style="left:1450px;top:83px" width="16" height="16" viewBox="0 0 16 16"><text x="7" y="11" font-family="Liberation Sans,sans-serif" font-weight="bold" font-size="14" text-anchor="middle" fill="#58b040">$</text><circle cx="7" cy="5" r="4.4" fill="none" stroke="#48a838" stroke-width="1.6" opacity=".7"/><rect x="1" y="10" width="4" height="2.4" fill="#e81020"/><text x="11" y="15.4" font-family="Liberation Sans,sans-serif" font-weight="bold" font-size="11.5" text-anchor="middle" fill="#e81020" stroke="#e81020" stroke-width=".7">%</text></svg>
<svg style="left:1514px;top:83px" width="16" height="16" viewBox="0 0 16 16"><path d="M1.4 1 L14.6 15" stroke="#8c6030" stroke-width="2.2"/><circle cx="8" cy="8" r="6.2" fill="#e8f4fc" stroke="#6c98c0" stroke-width="1.4"/><circle cx="8" cy="8" r="4.8" fill="#f8fcff" stroke="#a8d0ec" stroke-width=".8"/><path d="M4.4 4.2 L9.2 7 L7 9.2Z" fill="#2878d8"/><path d="M11.8 12 L7 9.2 L9.2 7Z" fill="#f03030"/></svg>
<svg style="left:1560px;top:83px" width="16" height="16" viewBox="0 0 16 16"><path d="M3.9 3.9 L12.1 12.1 M12.1 3.9 L3.9 12.1" stroke="#d42c3c" stroke-width="3.8" stroke-linecap="round" fill="none"/><path d="M3.9 3.9 L12.1 12.1 M12.1 3.9 L3.9 12.1" stroke="#f05c68" stroke-width="2.2" stroke-linecap="round" fill="none"/><path d="M3.6 3.4 L7 6.8 M12.4 3.4 L9 6.8" stroke="#f8a0a8" stroke-width=".9" stroke-linecap="round" fill="none"/></svg>
<svg style="left:399px;top:157px" width="13" height="10" viewBox="0 0 13 10"><defs><linearGradient id="fs" x1="0" x2="1"><stop offset="0" stop-color="#fff"/><stop offset="1" stop-color="#88a8d8"/></linearGradient></defs><path d="M.8 .8 H12.2 L8 5.6 V9.5 H5 V5.6Z" fill="url(#fs)" stroke="#000" stroke-width="1.2" stroke-linejoin="miter"/></svg>
<svg style="left:1127px;top:160px" width="8" height="5"><path d="M0 0 H8 L4 5Z" fill="#808080"/></svg>
<svg style="left:8px;top:441px" width="16" height="16" viewBox="0 0 16 16"><g transform="translate(2 -1) scale(.9)"><g fill="none" stroke-linecap="round"><path d="M8 4 Q5 1.2 1.4 4.8 M8 4 Q5 3.5 3.2 7.6 M8 4 Q11.5 1.2 15.2 5 M8 4 Q11.5 3.5 13 7.8 M8 4 Q6.5 0.8 4.2 1.2 M8 4 Q9.8 0.8 12.2 1.4" stroke="#5cc018" stroke-width="1.7"/><path d="M8 3.6 Q5 1.4 2 4.2 M8 3.6 Q11.5 1.4 14.5 4.4 M8 3.6 Q6.5 1 4.6 1.2 M8 3.6 Q9.8 1 12 1.4 M7.8 4 Q5.5 4 4 6.6 M8.2 4 Q11 4 12.4 6.8" stroke="#a0f038" stroke-width=".8"/></g><path d="M7.6 4.5 Q7.2 9 8.8 13" stroke="#e89818" stroke-width="2" fill="none"/></g><ellipse cx="12" cy="14" rx="3.8" ry="1.4" fill="#ffd800"/><rect x=".6" y="9" width="8.4" height="6.4" rx=".8" fill="#7c4420" stroke="#402008" stroke-width=".8"/><path d="M3.2 9 V7.6 H6.4 V9" fill="none" stroke="#402008" stroke-width="1"/><rect x=".6" y="11.4" width="8.4" height="1" fill="#a86c38"/></svg>
<svg style="left:117.5px;top:442.5px" width="10" height="10" viewBox="0 0 10 10"><path d="M2.2 2.2 L7.8 7.8 M7.8 2.2 L2.2 7.8" stroke="#404040" stroke-width="3.8" stroke-linecap="square" fill="none"/><path d="M2.2 2.2 L7.8 7.8 M7.8 2.2 L2.2 7.8" stroke="#fff" stroke-width="2.2" stroke-linecap="square" fill="none"/></svg>
<svg style="left:174px;top:441px" width="28" height="10" viewBox="0 0 28 10"><rect x=".5" y=".5" width="9" height="3" fill="#fff" stroke="#404040" stroke-width="1"/><rect x="18.5" y=".5" width="9" height="9" fill="#fff" stroke="#404040" stroke-width="1"/><path d="M18.5 2.5 H27.5" stroke="#404040" stroke-width="1"/></svg>
<svg style="left:66px;top:465px" width="16" height="16" viewBox="0 0 16 16"><path d="M6 2.2 H10 V6 H13.8 V10 H10 V13.8 H6 V10 H2.2 V6 H6Z" fill="#8ccc48" stroke="#3c8c50" stroke-width="1" stroke-linejoin="round"/><path d="M7 3.4 H9 M7 3.4 V7 H3.4" stroke="#c8ec88" stroke-width="1" fill="none"/></svg>
<svg style="left:90px;top:465px" width="16" height="16" viewBox="0 0 16 16"><circle cx="8" cy="8" r="6.9" fill="#fcfcfc" stroke="#2a9cf4" stroke-width="2.2"/><circle cx="8" cy="8" r="7.6" fill="none" stroke="#60c0ff" stroke-width=".6"/><circle cx="8" cy="8" r="5.6" fill="none" stroke="#c8b8a8" stroke-width=".6"/><path d="M8 8.4 V4.2 M8 8.4 L10.6 6.2" stroke="#383838" stroke-width="1" fill="none"/><g fill="#585048"><circle cx="8" cy="3.6" r=".55"/><circle cx="12.4" cy="8" r=".55"/><circle cx="3.6" cy="8" r=".55"/><circle cx="8" cy="12.4" r=".55"/><circle cx="10.2" cy="4.2" r=".35"/><circle cx="5.8" cy="4.2" r=".35"/><circle cx="4.2" cy="10.2" r=".35"/><circle cx="11.8" cy="10.2" r=".35"/></g><path d="M15.6 7.4 Q15.6 13.4 9.6 14.4 L9.8 16 L5.6 13.2 L9.4 10.6 L9.5 12.2 Q13 11.6 13.2 8Z" fill="#5ccc2c" stroke="#3ca018" stroke-width=".5" stroke-linejoin="round"/></svg>
<svg style="left:114px;top:465px" width="16" height="16" viewBox="0 0 16 16"><path d="M0 2.5 H14 M13.5 0 V9 M10.5 .5 H15.5 M2 8.5 H12.5" stroke="#787878" stroke-width="1" fill="none"/><path d="M1.5 3 V6 M3.5 3 V8 M5.5 3 V8 M7.5 3 V8 M9.5 3 V8 M11.5 3 V8" stroke="#787878" stroke-width="1" fill="none"/><path d="M1.5 3 L2.8 8.4 M12.4 9 L9.6 11.6" stroke="#787878" stroke-width="1" fill="none"/><circle cx="2.6" cy="13.5" r="1.6" fill="#fff" stroke="#f01010" stroke-width="1.2"/><circle cx="8.2" cy="13.5" r="1.6" fill="#fff" stroke="#f01010" stroke-width="1.2"/><path d="M7.4 6 H11.2 V3.6 L15.8 8 L11.2 12.4 V10 H7.4Z" fill="#18cc28" stroke="#0c9018" stroke-width=".6"/></svg>
<svg style="left:138px;top:465px" width="16" height="16" viewBox="0 0 16 16"><path d="M3.9 3.9 L12.1 12.1 M12.1 3.9 L3.9 12.1" stroke="#d42c3c" stroke-width="3.8" stroke-linecap="round" fill="none"/><path d="M3.9 3.9 L12.1 12.1 M12.1 3.9 L3.9 12.1" stroke="#f05c68" stroke-width="2.2" stroke-linecap="round" fill="none"/><path d="M3.6 3.4 L7 6.8 M12.4 3.4 L9 6.8" stroke="#f8a0a8" stroke-width=".9" stroke-linecap="round" fill="none"/></svg>
<svg style="left:162px;top:465px" width="16" height="16" viewBox="0 0 16 16"><ellipse cx="8.6" cy="13.6" rx="7" ry="1.9" fill="#ffe000"/><ellipse cx="8.6" cy="14.4" rx="5.5" ry="1.2" fill="#f0c800"/><path d="M7.6 4.5 Q7.2 9 8.8 13" stroke="#e89818" stroke-width="2" fill="none"/><path d="M7.3 6 h1.4 M7.5 8.3 h1.4 M7.9 10.5 h1.4" stroke="#a04808" stroke-width="0.8"/><path d="M10 12.8 h3" stroke="#503010" stroke-width="1.2"/><g fill="none" stroke-linecap="round"><path d="M8 4 Q5 1.2 1.4 4.8 M8 4 Q5 3.5 3.2 7.6 M8 4 Q11.5 1.2 15.2 5 M8 4 Q11.5 3.5 13 7.8 M8 4 Q6.5 0.8 4.2 1.2 M8 4 Q9.8 0.8 12.2 1.4" stroke="#5cc018" stroke-width="1.7"/><path d="M8 3.6 Q5 1.4 2 4.2 M8 3.6 Q11.5 1.4 14.5 4.4 M8 3.6 Q6.5 1 4.6 1.2 M8 3.6 Q9.8 1 12 1.4 M7.8 4 Q5.5 4 4 6.6 M8.2 4 Q11 4 12.4 6.8" stroke="#a0f038" stroke-width=".8"/></g></svg>
<svg style="left:186px;top:465px" width="16" height="16" viewBox="0 0 16 16"><text x="8" y="14" font-family="Liberation Serif,serif" font-weight="bold" font-size="18" text-anchor="middle" fill="#0848a8">i</text></svg>
<svg style="left:4px;top:870px" width="16" height="16" viewBox="-1.5 0 17 17"><path d="M1.2 3.4 Q4 1.4 7.2 3 L6 8 Q3.4 6.6 .2 8.4Z" fill="#f05020"/><path d="M8.2 3.4 Q11.4 5 15 2.6 L13.6 7.8 Q10.6 10 7 8.4Z" fill="#78c028"/><path d="M0 9.6 Q3.2 7.6 5.8 9 L4.6 14 Q2 12.6 -1.2 14.6Z" fill="#2880e0"/><path d="M6.8 9.6 Q10 11.4 13.4 9 L12 14.2 Q9 16.4 5.6 14.6Z" fill="#f8c020"/></svg>
<svg style="left:69px;top:868.5px" width="28.5" height="21" viewBox="0 0 16 12"><defs><radialGradient id="gm" cx=".32" cy=".28" r=".8"><stop offset="0" stop-color="#fff070"/><stop offset=".3" stop-color="#fcb820"/><stop offset=".65" stop-color="#e07010"/><stop offset="1" stop-color="#a83808"/></radialGradient></defs><path d="M.6 4.6 Q1.4 1.2 3.4 .6 Q9 1 15.4 3.6 Q14.6 5.8 8.6 11.2 Q7.6 11.6 6.6 10.8 Q2.6 8 .6 4.6Z" fill="url(#gm)"/></svg>
<svg style="left:1415px;top:871px" width="16" height="16" viewBox="0 0 16 16"><path d="M0 0 H8 V8 H0Z" fill="#f89820"/><path d="M8 0 H16 V8 H8Z" fill="#2878c8"/><path d="M0 8 H8 V16 H0Z" fill="#48a838"/><path d="M8 8 H16 V16 H8Z" fill="#e83020"/><path d="M0 8 Q8 5 16 8 M8 0 Q6.4 8 8 16" stroke="#d4d0c8" stroke-width=".8" fill="none"/></svg>
<svg style="left:1438px;top:872px" width="18" height="14" viewBox="0 0 18 14"><rect x="0" y="3.4" width="14" height="6.6" fill="#38b028" stroke="#187018" stroke-width=".8"/><path d="M2 10 v2.4 M4 10 v2.4 M6 10 v2.4 M8 10 v2.4" stroke="#d8c020" stroke-width="1.2"/><rect x="9.6" y="4.6" width="2.4" height="2.4" fill="#202020"/><path d="M14.6 1.6 V11 M14.6 2 H17 M14.6 5 H16.4" stroke="#000" stroke-width="1.2" fill="none"/></svg>
<svg style="left:1463px;top:870px" width="17" height="17" viewBox="0 0 17 17"><rect x="3.6" y="3.4" width="12" height="10" fill="#c8c8c8" stroke="#606060" stroke-width="1"/><rect x="5" y="4.8" width="9.2" height="7.2" fill="#e4e4e4"/><path d="M6 15.4 H14" stroke="#606060" stroke-width="1.2"/><path d="M1.6 2 V15 M3.4 2 V15 M.6 5.4 H4.4" stroke="#505050" stroke-width=".9"/><rect x=".8" y=".6" width="3.4" height="4.6" rx="1" fill="#f0f0f0" stroke="#505050" stroke-width=".8"/></svg>
<svg style="left:1487px;top:871px" width="17" height="17" viewBox="0 0 17 17"><path d="M.8 5.6 H3.4 L7 1.6 V14 L3.4 10.2 H.8Z" fill="#f0f0f0" stroke="#909090" stroke-width=".8"/><circle cx="11" cy="11" r="4.4" fill="#f02820" stroke="#fff" stroke-width=".6"/><path d="M9 9 L13 13 M13 9 L9 13" stroke="#fff" stroke-width="1.5"/></svg>
<svg style="left:1580px;top:873px" width="16" height="12" viewBox="0 0 16 12"><rect x="0" y="0" width="16" height="12" fill="#2868d0"/><rect x="0" y="0" width="16" height="4" fill="#58a0f0"/><rect x="0" y="9.6" width="16" height="2.4" fill="#1c2c50"/><rect x="1" y="10" width="2.4" height="1.6" fill="#38c030"/><rect x="0" y="0" width="16" height="12" fill="none" stroke="#a0b8d8" stroke-width=".8"/></svg>
<div class="a" style="left:543px;top:1px;width:21px;height:19px;border:1px solid #1c3c68;border-radius:3px;background:linear-gradient(#6c90c0,#3a68a4 55%,#1c4888 56%)"></div>
<svg style="left:548px;top:6px" width="12" height="10"><path d="M0 5 H6 M5.5 .5 V9.5 M11 .5 V9.5 M5.5 5 H11" stroke="#fff" stroke-width="2" fill="none"/></svg>
<svg style="left:570px;top:6px" width="10" height="11"><path d="M2.2 5 V3.4 Q2.2 1 5 1 Q7.8 1 7.8 3.4 V5" fill="none" stroke="#fff" stroke-width="1.6"/><rect x="0" y="5" width="10" height="6" fill="#fff"/><rect x="4.2" y="7" width="1.6" height="2.6" fill="#1c4888"/></svg>
<div class="a" style="left:997px;top:13px;width:7px;height:3px;background:#fff;"></div>
<svg style="left:1019px;top:6px" width="10" height="10"><path d="M3.5 3 V1 H9 V6.5 H7" fill="none" stroke="#fff" stroke-width="1.4"/><rect x=".8" y="4" width="5.4" height="5.2" fill="none" stroke="#fff" stroke-width="1.5"/></svg>
<svg style="left:1042px;top:8px" width="9" height="8"><path d="M1 .8 L8 7.2 M8 .8 L1 7.2" stroke="#fff" stroke-width="2.2"/></svg>
</div></body></html>
